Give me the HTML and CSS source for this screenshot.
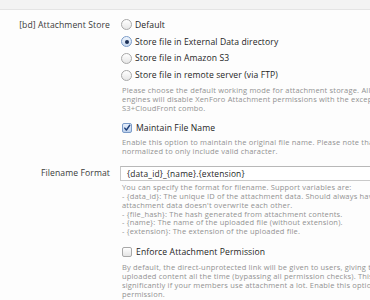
FILE: index.html
```html
<!DOCTYPE html>
<html>
<head>
<meta charset="utf-8">
<link rel="stylesheet" href="styles.css">
</head>
<body>
<div class="topbar"></div>
<div class="form">
  <div class="row row-store">
    <div class="label">[bd] Attachment Store</div>
    <div class="ctrl">
      <ul class="choices">
        <li><span class="radio"></span>Default</li>
        <li><span class="radio on"></span>Store file in External Data directory</li>
        <li><span class="radio"></span>Store file in Amazon S3</li>
        <li><span class="radio"></span>Store file in remote server (via FTP)</li>
      </ul>
      <p class="desc d1">Please choose the default working mode for attachment storage. All alternative<br>engines will disable XenForo Attachment permissions with the exception of<br>S3+CloudFront combo.</p>
      <div class="check-item c1"><span class="check on"><svg viewBox="0 0 10 10" width="10" height="10"><path d="M2.2 5.2 L4.2 7.6 L8.4 1.6" fill="none" stroke="#1d3f7a" stroke-width="1.8" stroke-linecap="round" stroke-linejoin="round"/></svg></span>Maintain File Name</div>
      <p class="desc d2">Enable this option to maintain the original file name. Please note that the file name will be<br>normalized to only include valid character.</p>
    </div>
  </div>
  <div class="row row-format">
    <div class="label lbl-format">Filename Format</div>
    <div class="ctrl">
      <div class="input">{data_id}_{name}.{extension}</div>
      <p class="desc d3">You can specify the format for filename. Support variables are:<br>- {data_id}: The unique ID of the attachment data. Should always have this to make sure<br>attachment data doesn't overwrite each other.<br>- {file_hash}: The hash generated from attachment contents.<br>- {name}: The name of the uploaded file (without extension).<br>- {extension}: The extension of the uploaded file.</p>
      <div class="check-item c2"><span class="check"></span>Enforce Attachment Permission</div>
      <p class="desc d4">By default, the direct-unprotected link will be given to users, giving them access to<br>uploaded content all the time (bypassing all permission checks). This will reduce server load<br>significantly if your members use attachment a lot. Enable this option if you want to enforce<br>permission.</p>
    </div>
  </div>
</div>
</body>
</html>
```

FILE: styles.css
```css
html, body {
  margin: 0;
  padding: 0;
  overflow: hidden;
  background: #fdfdfd;
}
body {
  font-family: "Open Sans", "DejaVu Sans", sans-serif;
  color: #222;
  width: 370px;
  height: 300px;
}
.topbar {
  height: 9px;
  background: #f3f3f3;
  border-bottom: 1px solid #e4e4e4;
}
.form {
  white-space: nowrap;
}
.row {
  display: grid;
  grid-template-columns: 110px 600px;
  column-gap: 10px;
}
.label {
  text-align: right;
  font-size: 8.6px;
  line-height: 16.7px;
  color: #3a3a3a;
  letter-spacing: 0.1px;
}
.row-store {
  padding-top: 6.6px;
}
.choices {
  list-style: none;
  margin: 0;
  padding: 0;
}
.choices li, .check-item {
  display: flex;
  align-items: center;
  height: 16.7px;
  font-size: 8.6px;
  color: #1e1e1e;
  letter-spacing: 0.1px;
}
.radio {
  box-sizing: border-box;
  width: 11px;
  height: 11px;
  border-radius: 50%;
  border: 1px solid #a8a8a8;
  background: linear-gradient(#ffffff, #e6e6e6);
  margin: 0 3px 0 1px;
  display: flex;
  align-items: center;
  justify-content: center;
}
.radio.on {
  border-color: #7b9bc8;
  background: linear-gradient(#eef4fc, #c9daf0);
}
.radio.on::after {
  content: "";
  width: 4px;
  height: 4px;
  border-radius: 50%;
  background: #1b2f55;
}
.check {
  box-sizing: border-box;
  width: 10px;
  height: 10px;
  border-radius: 2px;
  border: 1px solid #a8a8a8;
  background: linear-gradient(#ffffff, #e4e4e4);
  margin: 0 4px 0 2px;
  display: flex;
  align-items: center;
  justify-content: center;
}
.check.on {
  border-color: #7b9bc8;
  background: linear-gradient(#e8f0fb, #bcd0ec);
}
.check svg {
  display: block;
}
.desc {
  margin: 0;
  font-size: 7.5px;
  line-height: 8.9px;
  letter-spacing: 0.18px;
  color: #929292;
  padding-left: 2px;
}
.d1 { margin-top: 3px; }
.c1 { margin-top: 7px; }
.d2 { margin-top: 1.5px; }
.row-format {
  margin-top: 9.5px;
}
.lbl-format {
  line-height: 15px;
}
.input {
  box-sizing: border-box;
  height: 15px;
  border: 1px solid #c9c9c9;
  border-top-color: #b8b8b8;
  background: #ffffff;
  font-size: 8.4px;
  line-height: 13px;
  letter-spacing: 0.15px;
  padding-left: 6px;
  color: #1e1e1e;
}
.d3 { margin-top: 2.6px; line-height: 8.8px; }
.c2 { margin-top: 8px; }
.d4 { margin-top: 2.5px; line-height: 8.8px; }
```
